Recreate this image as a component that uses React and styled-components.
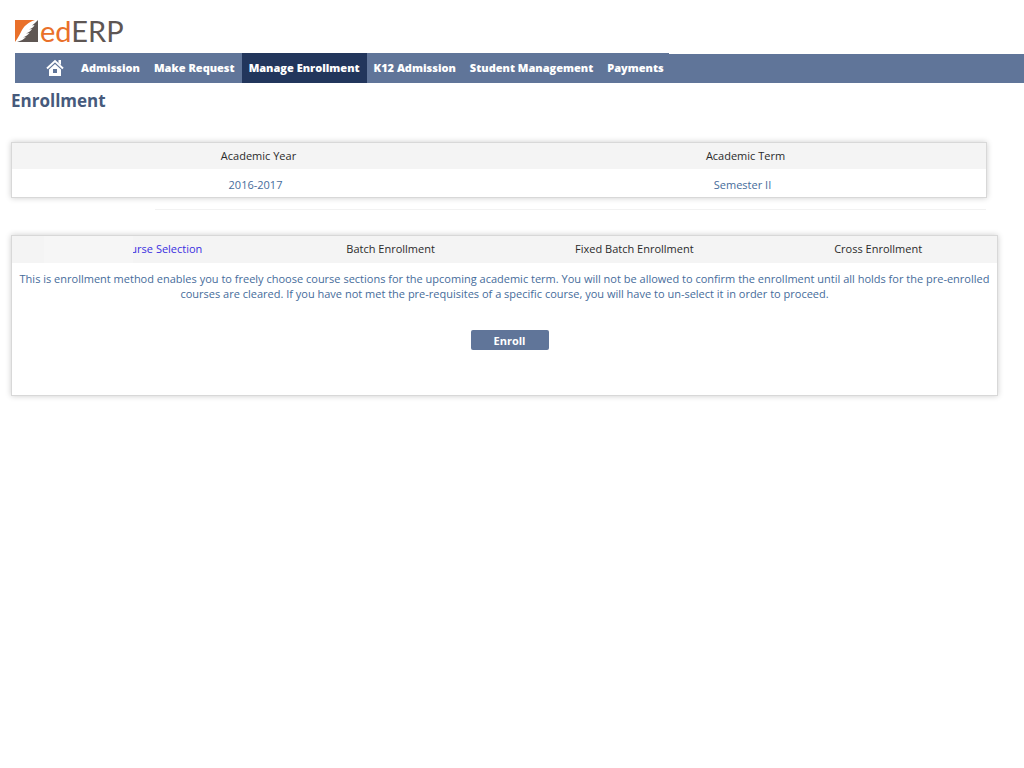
import React, { useState } from 'react'
import styled, { createGlobalStyle } from 'styled-components'

const navItems = ['Admission', 'Make Request', 'Manage Enrollment', 'K12 Admission', 'Student Management', 'Payments']
const methods = ['urse Selection', 'Batch Enrollment', 'Fixed Batch Enrollment', 'Cross Enrollment']

export default function App() {
  const [method, setMethod] = useState(methods[0])

  return (
    <>
      <GlobalStyle />
      <Header>
        <Logo href="#">
          <svg width="23" height="22" viewBox="0 0 23 22" aria-hidden="true">
            <path d="M0 0H20C14 2 10 5 7 10C5 14 3 18 0 22Z" fill="#e9702a" />
            <path d="M23 0V22H2C6 21 9 19 11 17L8 17.5C11 16 13 15 14.500 13L11 13.500C14 12 16 11 17 9L14 9.500C17 8 19 7 19.500 5L17 5.500C19 4 21 2 23 0Z" fill="#5e5653" />
          </svg>
          <LogoText><span>ed</span>ERP</LogoText>
        </Logo>
      </Header>
      <NavBar>
        <NavList>
          <HomeLink href="#" aria-label="Home">
            <svg width="18" height="18" viewBox="0 0 18 18" aria-hidden="true">
              <path d="M1 9.5L9 2L17 9.5" fill="none" stroke="#fff" strokeWidth="2" />
              <path d="M12.5 1H15V6L12.5 4Z" fill="#fff" />
              <path fillRule="evenodd" d="M9 5L15 10.5V17H3V10.5ZM7 10V14H11V10Z" fill="#fff" />
            </svg>
          </HomeLink>
          {navItems.map((item) => (
            <NavLink key={item} href="#" $active={item === 'Manage Enrollment'}>{item}</NavLink>
          ))}
        </NavList>
      </NavBar>
      <Main>
        <Title>Enrollment</Title>
        <TermTable>
          <thead>
            <tr><th>Academic Year</th><th>Academic Term</th></tr>
          </thead>
          <tbody>
            <tr><td>2016-2017</td><td>Semester II</td></tr>
          </tbody>
        </TermTable>
        <Divider />
        <Panel>
          <Tabs>
            {methods.map((name, i) => (
              <Tab key={name} $faded={i === 0}>
                <TabLink href="#" $active={name === method} onClick={() => setMethod(name)}>{name}</TabLink>
              </Tab>
            ))}
          </Tabs>
          <Description>
            This is enrollment method enables you to freely choose course sections for the upcoming academic term. You will not be allowed to confirm the enrollment until all holds for the pre-enrolled courses are cleared. If you have not met the pre-requisites of a specific course, you will have to un-select it in order to proceed.
          </Description>
          <EnrollButton type="button">Enroll</EnrollButton>
        </Panel>
      </Main>
    </>
  )
}

const GlobalStyle = createGlobalStyle`
* {
  box-sizing: border-box;
}

body {
  margin: 0;
  background: #fff;
  color: #2b2b2b;
  font-family: 'Open Sans', sans-serif;
  font-size: 11px;
  line-height: 15px;
}

a {
  text-decoration: none;
}
`

const Header = styled.header`
  height: 53px;
  padding: 15px 15px 0;
`

const Logo = styled.a`
  display: inline-flex;
  align-items: center;
  gap: 2px;
`

const LogoText = styled.span`
  color: #5e5653;
  font-family: Lato, sans-serif;
  font-size: 29px;
  line-height: 32px;

  span {
    color: #e9702a;
  }
`

const NavBar = styled.nav`
  height: 30px;
  margin-left: 15px;
  background: linear-gradient(#fff, #fff) right top / calc(100% - 654px) 1px no-repeat, #607599;
`

const NavList = styled.div`
  display: flex;
  height: 100%;
  padding-left: 31px;
`

const HomeLink = styled.a`
  display: flex;
  align-items: center;
  margin-right: 10px;
`

const NavLink = styled.a`
  padding: 0 7px;
  color: #fff;
  background: ${({ $active }) => ($active ? '#22365c' : 'transparent')};
  font-size: 11px;
  font-weight: 800;
  line-height: 30px;
  white-space: nowrap;
`

const Main = styled.main`
  padding: 6px 26px 20px 11px;
`

const Title = styled.h1`
  margin: 0;
  color: #465a7c;
  font-size: 17px;
  font-weight: 700;
  line-height: 24px;
`

const TermTable = styled.table`
  width: calc(100% - 11px);
  margin-top: 29px;
  border: 1px solid #d8d8d8;
  border-spacing: 0;
  table-layout: fixed;
  box-shadow: 0 0 6px rgba(0, 0, 0, 0.2);
  text-align: center;

  th {
    padding: 5px 0 6px 6px;
    background: #f4f4f4;
    font-weight: 400;
  }

  td {
    padding: 8px 0 5px;
    color: #466c9b;
  }
`

const Divider = styled.hr`
  height: 1px;
  margin: 11px 12px 25px 144px;
  border: 0;
  background: #f2f2f2;
`

const Panel = styled.section`
  min-height: 161px;
  border: 1px solid #d8d8d8;
  box-shadow: 0 0 6px rgba(0, 0, 0, 0.2);
  text-align: center;
`

const Tabs = styled.div`
  display: grid;
  grid-template-columns: repeat(4, 1fr);
  padding-left: 10px;
  background: #f4f4f4;
`

const Tab = styled.div`
  position: relative;
  padding: 5px 0 7px;
  padding-left: ${({ $faded }) => ($faded ? '45px' : '6px')};

  &::before {
    content: '';
    display: ${({ $faded }) => ($faded ? 'block' : 'none')};
    position: absolute;
    top: 0;
    bottom: 0;
    left: 22px;
    width: 89px;
    background: #f6f6f6;
  }
`

const TabLink = styled.a`
  color: ${({ $active }) => ($active ? '#3a2fe0' : 'inherit')};
`

const Description = styled.p`
  margin: 8px 4px 29px;
  color: #466c9b;
`

const EnrollButton = styled.button`
  width: 78px;
  height: 20px;
  margin-left: 10px;
  padding: 0;
  border: 0;
  border-radius: 2px;
  background: #607599;
  color: #fff;
  cursor: pointer;
  font-family: inherit;
  font-size: 11px;
  font-weight: 700;
`
